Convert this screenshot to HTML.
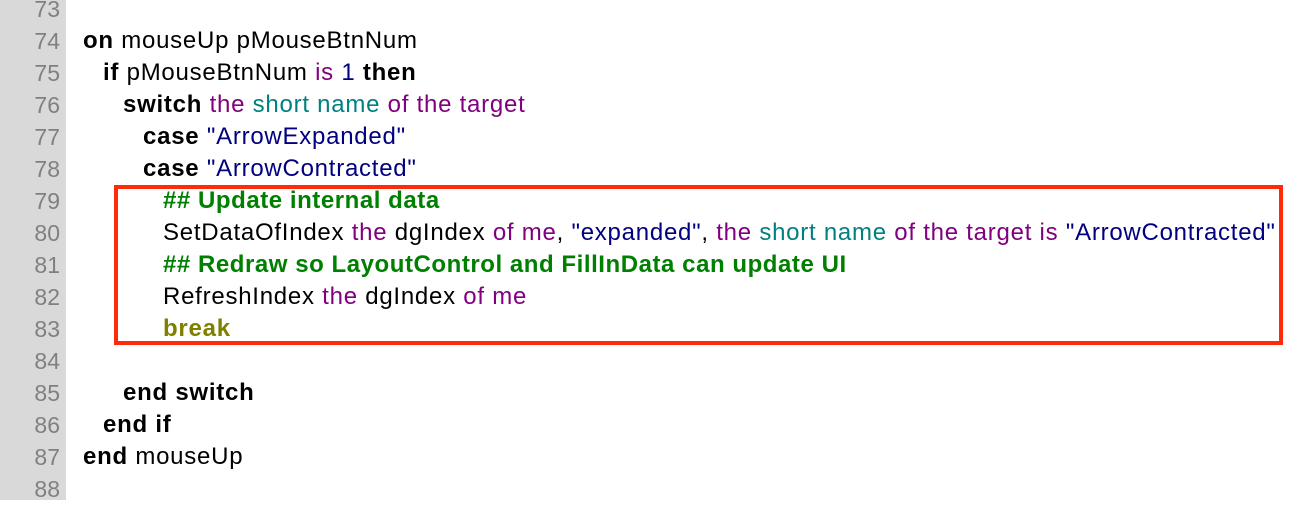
<!DOCTYPE html>
<html><head><meta charset="utf-8"><style>
body{margin:0;width:1300px;height:500px;overflow:hidden;background:#fff;font-family:"Liberation Sans",Arial,sans-serif;font-size:24px;letter-spacing:0.75px;position:relative}
.g{position:absolute;left:0;top:0;width:66px;height:500px;background:#d9d9d9}
.l{position:absolute;left:0;height:32px;line-height:32px;white-space:pre;width:1300px;margin-top:1px}
.n{position:absolute;left:0;width:60px;text-align:right;color:#808080;font-size:23px;letter-spacing:0}
.t{position:absolute;left:83px}
b{font-weight:bold}
.p{color:#800080}.c{color:#008080}.s{color:#000080}.gr{color:#008000;font-weight:bold;letter-spacing:0.55px}.o{color:#808000;font-weight:bold}
.box{position:absolute;left:114px;top:185px;width:1161px;height:152px;border:4px solid #ff2a0a}
</style></head><body>
<div class="g"></div>
<div class="l" style="top:-8px"><span class="n">73</span></div>
<div class="l" style="top:24px"><span class="n">74</span><span class="t"><b>on</b> mouseUp pMouseBtnNum</span></div>
<div class="l" style="top:56px"><span class="n">75</span><span class="t" style="left:103px"><b>if</b> pMouseBtnNum <span class="p">is</span> <span class="s">1</span> <b>then</b></span></div>
<div class="l" style="top:88px"><span class="n">76</span><span class="t" style="left:123px"><b>switch</b> <span class="p">the</span> <span class="c">short name</span> <span class="p">of the</span> <span class="p">target</span></span></div>
<div class="l" style="top:120px"><span class="n">77</span><span class="t" style="left:143px"><b>case</b> <span class="s">"ArrowExpanded"</span></span></div>
<div class="l" style="top:152px"><span class="n">78</span><span class="t" style="left:143px"><b>case</b> <span class="s">"ArrowContracted"</span></span></div>
<div class="l" style="top:184px"><span class="n">79</span><span class="t gr" style="left:163px">## Update internal data</span></div>
<div class="l" style="top:216px"><span class="n">80</span><span class="t" style="left:163px">SetDataOfIndex <span class="p">the</span> dgIndex <span class="p">of me</span>, <span class="s">"expanded"</span>, <span class="p">the</span> <span class="c">short name</span> <span class="p">of the target is</span> <span class="s">"ArrowContracted"</span></span></div>
<div class="l" style="top:248px"><span class="n">81</span><span class="t gr" style="left:163px">## Redraw so LayoutControl and FillInData can update UI</span></div>
<div class="l" style="top:280px"><span class="n">82</span><span class="t" style="left:163px">RefreshIndex <span class="p">the</span> dgIndex <span class="p">of me</span></span></div>
<div class="l" style="top:312px"><span class="n">83</span><span class="t o" style="left:163px">break</span></div>
<div class="l" style="top:344px"><span class="n">84</span></div>
<div class="l" style="top:376px"><span class="n">85</span><span class="t" style="left:123px"><b>end switch</b></span></div>
<div class="l" style="top:408px"><span class="n">86</span><span class="t" style="left:103px"><b>end if</b></span></div>
<div class="l" style="top:440px"><span class="n">87</span><span class="t"><b>end</b> mouseUp</span></div>
<div class="l" style="top:472px"><span class="n">88</span></div>
<div class="box"></div>
</body></html>
